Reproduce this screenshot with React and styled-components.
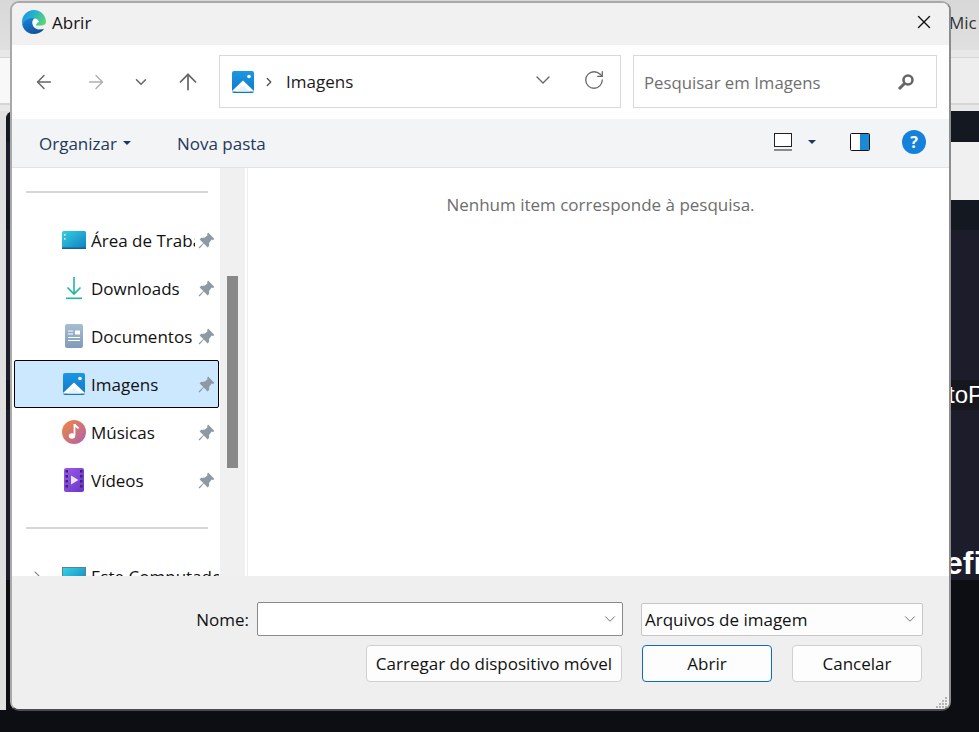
import React from 'react';
import styled, { createGlobalStyle } from 'styled-components';
import { ArrowLeft, ArrowRight, ArrowUp, ChevronDown, ChevronRight, RotateCw, X } from 'lucide-react';

const GlobalStyle = createGlobalStyle`
  html, body {
    margin: 0;
    padding: 0;
    overflow: hidden;
    background: #e0e0e0;
    font-family: "Open Sans", "Noto Sans", sans-serif;
  }
`;

/* page behind the dialog */
const Page = styled.div`
  position: relative;
  width: 979px;
  height: 732px;
  overflow: hidden;
  background: #e0e0e0;
`;

const BrowserTabs = styled.div`
  height: 50px;
  background: linear-gradient(#d8d8d8, #e0e0e0);
  display: flex;
  justify-content: flex-end;
  align-items: center;
  padding-bottom: 6px;
  box-sizing: border-box;
  font-size: 17px;
  color: #333;
`;

const Clip = styled.span`
  width: ${p => p.$w || 29}px;
  overflow: hidden;
  white-space: nowrap;
`;

const BarGap = styled.div`
  height: ${p => p.$h}px;
  background: #e8e8e8;
`;

const BrowserBar = styled.div`
  height: 45px;
  background: linear-gradient(90deg, #f8f8f8, #eeeeee);
  border-top: 1px solid #d6d6d6;
  border-bottom: 2px solid #d6d6d6;
`;

const Site = styled.div`
  margin-left: 6px;
  border-top-left-radius: 8px;
  overflow: hidden;
  background: #1c1c2a;
  height: 599px;
`;

const Band = styled.div`
  height: ${p => p.$h}px;
  margin-left: ${p => p.$inset || 0}px;
  background: ${p => p.$bg};
  color: #fff;
  font-size: ${p => p.$size || 22}px;
  font-weight: ${p => p.$weight || 400};
  font-family: "Liberation Sans", sans-serif;
  display: flex;
  justify-content: flex-end;
  align-items: center;
`;

const PageBottom = styled.div`
  height: 22px;
  background: #0c0e14;
`;

/* the dialog */
const Dialog = styled.div`
  position: absolute;
  left: 10px;
  top: 1px;
  width: 941px;
  height: 710px;
  box-sizing: border-box;
  border: 2px solid #a9a9a9;
  border-bottom-color: #4a4a4f;
  border-right-color: #8c8c8c;
  border-radius: 9px;
  overflow: hidden;
  background: #fff;
  display: flex;
  flex-direction: column;
  color: #000;
`;

const TitleBar = styled.div`
  height: 42px;
  flex: none;
  box-sizing: border-box;
  background: #f1f1f1;
  display: flex;
  align-items: center;
  padding: 0 14px 4px 10px;
  font-size: 17px;
  gap: 6px;
  color: #111;
`;

const CloseBtn = styled.div`
  margin-left: auto;
  display: flex;
`;

const NavBar = styled.div`
  height: 74px;
  flex: none;
  background: #fff;
  display: flex;
  align-items: flex-start;
  padding: 10px 0 0 9px;
  box-sizing: border-box;
`;

const NavButton = styled.div`
  width: ${p => p.$w}px;
  height: 53px;
  display: flex;
  align-items: center;
  justify-content: center;
  color: ${p => p.$color || '#666'};
  flex: none;
`;

const AddressBox = styled.div`
  width: 402px;
  height: 53px;
  box-sizing: border-box;
  border: 1px solid #d9d9d9;
  display: flex;
  align-items: center;
  padding: 0 15px 0 12px;
  font-size: 17px;
  color: #1a1a1a;
`;

const Crumb = styled.span`
  margin-left: 8px;
  display: flex;
  color: #555;
`;

const CrumbText = styled.span`
  margin-left: 10px;
  margin-right: auto;
`;

const AddressIcon = styled.span`
  display: flex;
  color: ${p => p.$color || '#666'};
  margin-left: ${p => p.$ml || 0}px;
  margin-bottom: 3px;
`;

const SearchBox = styled.div`
  width: 304px;
  height: 53px;
  margin-left: 12px;
  box-sizing: border-box;
  border: 1px solid #d9d9d9;
  display: flex;
  align-items: center;
  justify-content: space-between;
  padding: 1px 21px 0 10px;
  font-size: 16.8px;
  color: #6f6f6f;
`;

const CommandBar = styled.div`
  height: 49px;
  flex: none;
  box-sizing: border-box;
  background: #f3f4f6;
  border-bottom: 1px solid #e3e3e3;
  display: flex;
  align-items: center;
  padding: 0 23px 0 27px;
  font-size: 17px;
  color: #1e395b;
`;

const Command = styled.span`
  display: flex;
  align-items: center;
  gap: 6px;
  margin-right: ${p => p.$mr || 0}px;
`;

const Caret = styled.span`
  width: 0;
  height: 0;
  margin-left: ${p => p.$ml || 0}px;
  border-left: 4px solid transparent;
  border-right: 4px solid transparent;
  border-top: 4px solid #1e395b;
  display: inline-block;
`;

const CommandIcons = styled.div`
  margin-left: auto;
  margin-bottom: 3px;
  display: flex;
  align-items: center;
`;

const CommandIcon = styled.span`
  display: flex;
  margin-left: ${p => p.$ml || 0}px;
`;

const Body = styled.div`
  flex: none;
  height: 408px;
  display: flex;
  overflow: hidden;
`;

const Sidebar = styled.div`
  width: 208px;
  flex: none;
  padding: 23px 0 0;
  box-sizing: border-box;
  background: #fff;
  overflow: hidden;
`;

const Divider = styled.div`
  height: 2px;
  margin: ${p => p.$top || 0}px 12px 23px 14px;
  background: #d6d6d6;
`;

const Row = styled.div`
  height: 48px;
  box-sizing: border-box;
  display: flex;
  align-items: center;
  margin-left: 2px;
  width: 205px;
  padding-left: 45px;
  font-size: 17px;
  color: #111;
  background: ${p => (p.$selected ? '#cce8ff' : 'transparent')};
  border: 1px solid ${p => (p.$selected ? '#000' : 'transparent')};
  border-radius: 2px;
  position: relative;
`;

const RowIcon = styled.span`
  width: 28px;
  flex: none;
  display: flex;
  justify-content: center;
`;

const RowLabel = styled.span`
  margin-left: 3px;
  width: ${p => p.$w || 104}px;
  overflow: hidden;
  white-space: nowrap;
  flex: none;
`;

const PinIcon = styled.span`
  display: flex;
  margin-left: 3px;
`;

const TreeArrow = styled.span`
  position: absolute;
  left: 14px;
  display: flex;
  color: #8a8a8a;
`;

const Track = styled.div`
  width: 25px;
  flex: none;
  background: #f0f0f0;
  padding: 108px 7px 0 7px;
  box-sizing: border-box;
`;

const Thumb = styled.div`
  width: 11px;
  height: 192px;
  background: #888;
`;

const Results = styled.div`
  flex: 1;
  margin-left: 2px;
  border-left: 1px solid #eeeeee;
  text-align: center;
  padding: 25px 0 0 4px;
  font-size: 17px;
  color: #6d6d6d;
  background: #fff;
`;

const Footer = styled.div`
  flex: 1;
  min-height: 0;
  background: #efefef;
  padding: 26px 26px 0 0;
  box-sizing: border-box;
  position: relative;
  font-size: 17px;
  color: #111;
  display: flex;
  flex-direction: column;
  align-items: flex-end;
`;

const FooterRow = styled.div`
  display: flex;
  align-items: center;
  margin-bottom: 9px;
  margin-right: ${p => p.$mr || 0}px;
`;

const FieldLabel = styled.span`
  margin-right: 8px;
`;

const Field = styled.div`
  width: ${p => p.$w}px;
  height: ${p => p.$h}px;
  box-sizing: border-box;
  margin-right: ${p => p.$mr || 0}px;
  background: ${p => p.$bg || '#fff'};
  border: 1px solid ${p => p.$border};
  border-radius: 2px;
  display: flex;
  align-items: center;
  justify-content: space-between;
  padding: 0 3px 0 3px;
  color: #666;
`;

const FieldText = styled.span`
  color: #111;
`;

const Button = styled.div`
  width: ${p => p.$w}px;
  height: 37px;
  box-sizing: border-box;
  margin-left: ${p => p.$ml || 0}px;
  background: #fdfdfd;
  border: 1px solid ${p => (p.$primary ? '#0f6cbd' : '#d0d0d0')};
  border-radius: 4px;
  display: flex;
  align-items: center;
  justify-content: center;
  white-space: nowrap;
  color: #111;
`;

const Grip = styled.svg`
  position: absolute;
  right: 1px;
  bottom: 0;
`;

const EdgeLogo = () => (
  <svg width="24" height="24" viewBox="0 0 24 24">
    <defs>
      <linearGradient id="edgeA" x1="0" y1="0" x2="1" y2="0.5">
        <stop offset="0" stopColor="#1b8fe0" />
        <stop offset="0.5" stopColor="#27b4cc" />
        <stop offset="1" stopColor="#62d66a" />
      </linearGradient>
      <linearGradient id="edgeB" x1="0" y1="0" x2="0.6" y2="1">
        <stop offset="0" stopColor="#1a86dc" />
        <stop offset="1" stopColor="#164f9e" />
      </linearGradient>
    </defs>
    <path d="M12 0C18.600 0 24 5.400 24 12C24 14.400 22 15.400 19 15.400H14C13.600 17.500 15.500 19.600 18.500 19.600C19.800 19.600 21 19.300 22 18.800C20 22 16.300 24 12 24C5.400 24 0 18.600 0 12C0 5.400 5.400 0 12 0Z" fill="url(#edgeA)" />
    <path d="M.5 15C2 21 7 24 12 24C16.300 24 20 22 22 18.800C21 19.300 19.800 19.600 18.500 19.600C14 19.600 11 17 10.500 14C10 11.500 11 9.500 12.500 8.500C7 7.500 2 10 .5 15Z" fill="url(#edgeB)" />
    <path d="M12.500 8.500C10.700 9.500 10 11.500 10.500 14C11 17 14 19.600 18.500 19.600C15.500 19.600 13.600 17.500 14 15.400C14.300 13.500 15.500 12.500 17 12C16.300 9.500 14.500 8.300 12.500 8.500Z" fill="#fff" />
  </svg>
);

const PicturesIcon = ({ size = 22 }) => (
  <svg width={size} height={size} viewBox="0 0 22 22">
    <defs>
      <linearGradient id="picSky" x1="0" y1="0" x2="0" y2="1">
        <stop offset="0" stopColor="#1a97e4" />
        <stop offset="1" stopColor="#1178c8" />
      </linearGradient>
    </defs>
    <rect width="22" height="22" rx="2" fill="url(#picSky)" />
    <circle cx="17" cy="5.500" r="1.800" fill="#fff" />
    <path d="M0 20 11 9.500 22 20v0.500H0Z" fill="#fff" />
    <path d="M4 20.500 11 14.500 18 20.500Z" fill="#e6f1fa" />
  </svg>
);

const DesktopIcon = () => (
  <svg width="24" height="18" viewBox="0 0 24 18">
    <defs>
      <linearGradient id="deskFill" x1="0" y1="0" x2="1" y2="1">
        <stop offset="0" stopColor="#35cfe2" />
        <stop offset="1" stopColor="#0f7fc0" />
      </linearGradient>
    </defs>
    <rect width="24" height="18" rx="1.500" fill="url(#deskFill)" />
    <rect x="2" y="3" width="1.500" height="1.500" fill="#fff" />
    <rect x="2" y="7" width="1.500" height="1.500" fill="#fff" />
    <rect x="0" y="16.500" width="24" height="1.500" fill="#16618f" />
  </svg>
);

const DownloadIcon = () => (
  <svg width="18" height="24" viewBox="0 0 18 24">
    <path d="M9 1v17M2.500 11.500 9 18l6.500-6.500" fill="none" stroke="#1fb89a" strokeWidth="1.600" />
    <rect x="1" y="21.500" width="16" height="1.600" fill="#1fb89a" />
  </svg>
);

const DocumentIcon = () => (
  <svg width="18" height="24" viewBox="0 0 18 24">
    <defs>
      <linearGradient id="docFill" x1="0" y1="0" x2="0" y2="1">
        <stop offset="0" stopColor="#a9bdd2" />
        <stop offset="1" stopColor="#7f9bb9" />
      </linearGradient>
    </defs>
    <rect width="18" height="24" rx="2" fill="url(#docFill)" />
    <rect x="10" y="6.500" width="5" height="4" fill="#fff" />
    <path d="M3 7h5M3 10h5M3 13.500h12M3 16.500h12" stroke="#fff" strokeWidth="1" />
  </svg>
);

const MusicIcon = () => (
  <svg width="24" height="24" viewBox="0 0 24 24">
    <defs>
      <linearGradient id="musicFill" x1="0" y1="0" x2="1" y2="1">
        <stop offset="0" stopColor="#f08a3e" />
        <stop offset="1" stopColor="#b05fb0" />
      </linearGradient>
    </defs>
    <circle cx="12" cy="12" r="12" fill="url(#musicFill)" />
    <path d="M12.500 4v11.500" stroke="#fff" strokeWidth="1.800" />
    <path d="M12.500 4c.5 2.500 3 2.500 4 4.500" fill="none" stroke="#fff" strokeWidth="1.800" />
    <ellipse cx="10" cy="16" rx="3.200" ry="2.800" fill="#fff" />
  </svg>
);

const VideoIcon = () => (
  <svg width="20" height="24" viewBox="0 0 20 24">
    <defs>
      <linearGradient id="vidFill" x1="0" y1="0" x2="1" y2="1">
        <stop offset="0" stopColor="#9a5be8" />
        <stop offset="1" stopColor="#6a35c8" />
      </linearGradient>
    </defs>
    <rect width="20" height="24" rx="2" fill="url(#vidFill)" />
    {[2, 7, 12, 17].map(y => (
      <g key={y} fill="#3d2478">
        <rect x="1.500" y={y} width="2.500" height="2.500" />
        <rect x="16" y={y} width="2.500" height="2.500" />
      </g>
    ))}
    <path d="M7 7.500v9l7.500-4.500Z" fill="#e8e2fa" />
  </svg>
);

const ComputerIcon = () => (
  <svg width="24" height="18" viewBox="0 0 24 18">
    <defs>
      <linearGradient id="pcFill" x1="0" y1="0" x2="1" y2="1">
        <stop offset="0" stopColor="#35d3e2" />
        <stop offset="1" stopColor="#1080c0" />
      </linearGradient>
    </defs>
    <rect width="24" height="18" fill="#5f7f95" />
    <rect x="1" y="1" width="22" height="17" fill="url(#pcFill)" />
  </svg>
);

const Pin = () => (
  <svg width="17" height="17" viewBox="0 0 16 16">
    <path d="M9.500.500 15.500 6.500 14 7.500 13 7 10.500 10 10.500 13 9 14.500 5.500 10.900 1.500 15.500.500 14.500 5 10.400 1.500 7 3 5.500 6 5.500 9 3 8.500 2Z" fill="#8e9aa3" />
  </svg>
);

const SearchGlyph = () => (
  <svg width="18" height="18" viewBox="0 0 18 18">
    <circle cx="11" cy="7" r="4.500" fill="none" stroke="#666" strokeWidth="2.600" />
    <path d="M7.500 10.500 2 16" stroke="#666" strokeWidth="3" />
  </svg>
);

const ViewIcon = () => (
  <svg width="18" height="18" viewBox="0 0 18 18">
    <rect x="0.500" y="0.500" width="17" height="13" fill="#fff" stroke="#222" />
    <rect y="16.500" width="18" height="1" fill="#222" />
  </svg>
);

const PaneIcon = () => (
  <svg width="20" height="18" viewBox="0 0 20 18">
    <rect x="0.500" y="0.500" width="19" height="17" rx="1" fill="#fff" stroke="#111" />
    <rect x="10" y="1" width="9" height="16" fill="#1a8ad8" />
  </svg>
);

const HelpIcon = () => (
  <svg width="24" height="24" viewBox="0 0 24 24">
    <circle cx="12" cy="12" r="12" fill="#1482da" />
    <text x="12" y="17.500" textAnchor="middle" fontSize="16" fontWeight="700" fontFamily="Open Sans, sans-serif" fill="#fff">?</text>
  </svg>
);

const quickAccess = [
  { label: 'Área de Trabalho', icon: <DesktopIcon /> },
  { label: 'Downloads', icon: <DownloadIcon /> },
  { label: 'Documentos', icon: <DocumentIcon /> },
  { label: 'Imagens', icon: <PicturesIcon />, selected: true },
  { label: 'Músicas', icon: <MusicIcon /> },
  { label: 'Vídeos', icon: <VideoIcon /> },
];

const gripDots = [[10, 0], [7, 3], [10, 3], [4, 6], [7, 6], [10, 6], [1, 9], [4, 9], [7, 9], [10, 9]];

export default function App() {
  return (
    <Page>
      <GlobalStyle />
      <BrowserTabs><Clip $w={30}>Mic</Clip></BrowserTabs>
      <BarGap $h={7} />
      <BrowserBar />
      <BarGap $h={6} />
      <Site>
        <Band $h={31} $bg="#141820" />
        <Band $h={58} $inset={5} $bg="#f0f0f0" />
        <Band $h={30} $bg="#141820" />
        <Band $h={150} $bg="#1c1c2a" />
        <Band $h={30} $bg="#16161f" $size={24}><Clip $w={31}>toP</Clip></Band>
        <Band $h={136} $bg="#1c1c2a" />
        <Band $h={34} $bg="#1c1c2a" $size={32} $weight={700}><Clip $w={34}>efi</Clip></Band>
        <Band $h={130} $bg="#0d0e14" />
      </Site>
      <PageBottom />

      <Dialog>
        <TitleBar>
          <EdgeLogo />
          Abrir
          <CloseBtn><X size={22} strokeWidth={1.5} color="#111" /></CloseBtn>
        </TitleBar>

        <NavBar>
          <NavButton $w={45}><ArrowLeft size={22} strokeWidth={1.6} /></NavButton>
          <NavButton $w={60} $color="#b0b0b0"><ArrowRight size={22} strokeWidth={1.6} /></NavButton>
          <NavButton $w={30}><ChevronDown size={18} strokeWidth={2} /></NavButton>
          <NavButton $w={63}><ArrowUp size={26} strokeWidth={1.6} /></NavButton>
          <AddressBox>
            <PicturesIcon />
            <Crumb><ChevronRight size={14} strokeWidth={2.4} /></Crumb>
            <CrumbText>Imagens</CrumbText>
            <AddressIcon><ChevronDown size={24} strokeWidth={1.4} /></AddressIcon>
            <AddressIcon $ml={28}><RotateCw size={22} strokeWidth={1.4} /></AddressIcon>
          </AddressBox>
          <SearchBox>
            Pesquisar em Imagens
            <SearchGlyph />
          </SearchBox>
        </NavBar>

        <CommandBar>
          <Command $mr={46}>Organizar <Caret /></Command>
          <Command>Nova pasta</Command>
          <CommandIcons>
            <ViewIcon />
            <Caret $ml={16} />
            <CommandIcon $ml={34}><PaneIcon /></CommandIcon>
            <CommandIcon $ml={32}><HelpIcon /></CommandIcon>
          </CommandIcons>
        </CommandBar>

        <Body>
          <Sidebar>
            <Divider />
            {quickAccess.map(item => (
              <Row key={item.label} $selected={item.selected}>
                <RowIcon>{item.icon}</RowIcon>
                <RowLabel>{item.label}</RowLabel>
                <PinIcon><Pin /></PinIcon>
              </Row>
            ))}
            <Divider $top={23} />
            <Row>
              <TreeArrow><ChevronRight size={16} strokeWidth={1.6} /></TreeArrow>
              <RowIcon><ComputerIcon /></RowIcon>
              <RowLabel $w={128}>Este Computador</RowLabel>
            </Row>
          </Sidebar>
          <Track><Thumb /></Track>
          <Results>Nenhum item corresponde à pesquisa.</Results>
        </Body>

        <Footer>
          <FooterRow>
            <FieldLabel>Nome:</FieldLabel>
            <Field $w={366} $h={34} $mr={18} $border="#8a8a8a">
              <span />
              <ChevronDown size={18} strokeWidth={1.2} />
            </Field>
            <Field $w={282} $h={33} $bg="#fdfdfd" $border="#c6c6c6">
              <FieldText>Arquivos de imagem</FieldText>
              <ChevronDown size={18} strokeWidth={1.2} />
            </Field>
          </FooterRow>
          <FooterRow $mr={1}>
            <Button $w={256}>Carregar do dispositivo móvel</Button>
            <Button $w={130} $ml={20} $primary>Abrir</Button>
            <Button $w={130} $ml={20}>Cancelar</Button>
          </FooterRow>
          <Grip width="13" height="12" viewBox="0 0 13 12">
            {gripDots.map(([x, y]) => (
              <rect key={`${x}-${y}`} x={x} y={y} width="2" height="2" fill="#b4b4b4" />
            ))}
          </Grip>
        </Footer>
      </Dialog>
    </Page>
  );
}
